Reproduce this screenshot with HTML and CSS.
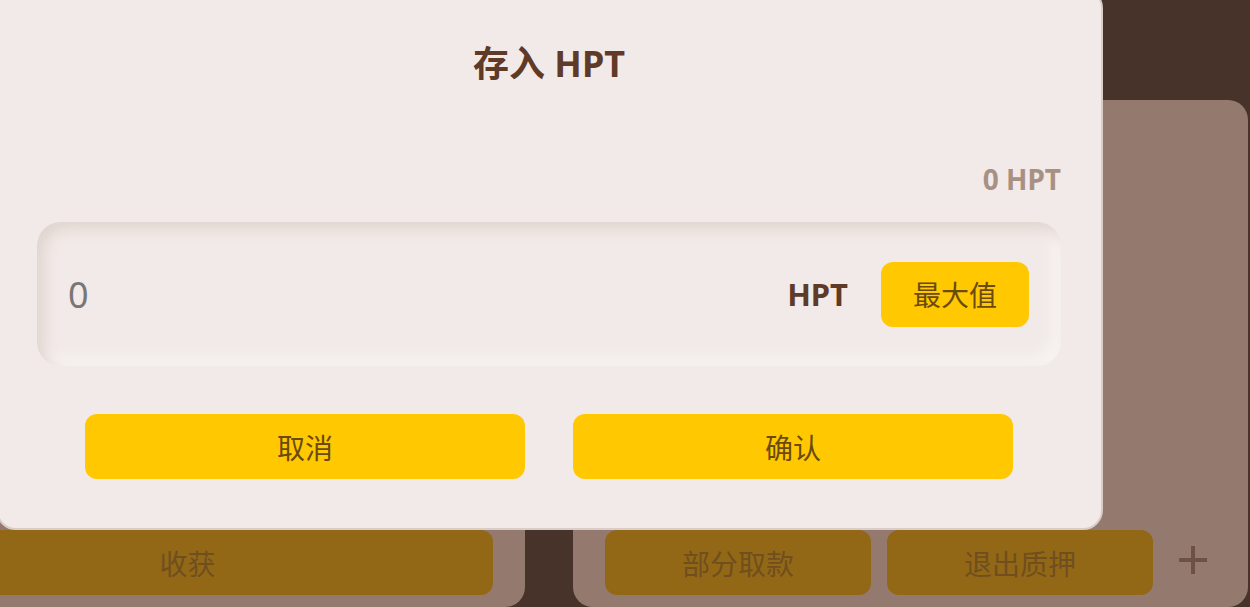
FILE: index.html
```html
<!DOCTYPE html>
<html lang="zh-CN">
<head>
  <meta charset="UTF-8">
  <meta name="viewport" content="width=device-width, initial-scale=1.0">
  <title>存入 HPT</title>
  <link rel="stylesheet" href="styles.css">
</head>
<body>

  <div class="page">
    <div class="card">
      <div class="actions">
        <button class="act wide">收获</button>
      </div>
    </div>
    <div class="card">
      <div class="actions">
        <button class="act">部分取款</button>
        <button class="act">退出质押</button>
        <div class="plus">
          <svg width="28" height="28" viewBox="0 0 28 28">
            <path d="M14 0V28M0 14H28" stroke="#6e5142" stroke-width="4"/>
          </svg>
        </div>
      </div>
    </div>
  </div>

  <div class="modal">
    <div class="modal-title">存入 HPT</div>
    <div class="balance">0 HPT</div>
    <div class="amount">
      <input class="amount-input" type="text" placeholder="0">
      <span class="unit">HPT</span>
      <button class="max">最大值</button>
    </div>
    <div class="modal-buttons">
      <button class="yellow">取消</button>
      <button class="yellow">确认</button>
    </div>
  </div>

</body>
</html>
```

FILE: styles.css
```css
body {
  margin: 0;
  background-color: #48332a;
  font-family: "Noto Sans", "Noto Sans CJK SC", sans-serif;
  overflow: hidden;
}

button {
  font-family: inherit;
  border: none;
  cursor: pointer;
}

.page {
  display: flex;
  gap: 48px;
  height: 607px;
  margin-left: -150px;
  padding-top: 100px;
  box-sizing: border-box;
}

.card {
  width: 675px;
  flex-shrink: 0;
  background-color: #947a6e;
  border-radius: 20px;
  padding: 0 32px 12px;
  box-sizing: border-box;
  display: flex;
  flex-direction: column;
  justify-content: flex-end;
}

.actions {
  display: flex;
  gap: 16px;
  align-items: center;
}

.act {
  width: 266px;
  height: 65px;
  border-radius: 12px;
  background-color: #926817;
  color: #704e1e;
  font-size: 28px;
}

.act.wide {
  width: 100%;
}

.plus {
  width: 47px;
  display: flex;
  justify-content: center;
  margin-bottom: 5px;
}

.modal {
  position: absolute;
  left: -4px;
  top: -12px;
  width: 1107px;
  box-sizing: border-box;
  background-color: #f2eae8;
  border: 2px solid #dacdc7;
  border-radius: 20px;
  padding: 50px 40px 49px 39px;
}

.modal-title {
  text-align: center;
  font-size: 36px;
  font-weight: 700;
  line-height: 48px;
  color: #5e3a27;
}

.balance {
  margin-top: 71px;
  text-align: right;
  font-size: 28px;
  font-weight: 700;
  line-height: 40px;
  color: #a89183;
}

.amount {
  margin-top: 23px;
  height: 144px;
  box-sizing: border-box;
  border-radius: 24px;
  padding: 0 32px 0 31px;
  display: flex;
  align-items: center;
  background-color: #f2eae8;
  box-shadow: inset 7px 7px 14px #e0d5cf, inset -7px -7px 14px #f8f5f3;
}

.amount-input {
  flex: 1;
  min-width: 0;
  border: none;
  outline: none;
  background: transparent;
  font-family: inherit;
  font-size: 36px;
  color: #5e3a27;
  padding: 0;
}

.amount-input::placeholder {
  color: #777;
}

.unit {
  font-size: 31px;
  font-weight: 700;
  color: #5e3a27;
  margin-right: 33px;
}

.max {
  width: 148px;
  height: 65px;
  border-radius: 12px;
  background-color: #ffc800;
  color: #6b4a0e;
  font-size: 28px;
}

.modal-buttons {
  margin-top: 48px;
  padding: 0 48px;
  display: flex;
  gap: 48px;
}

.yellow {
  flex: 1;
  height: 65px;
  border-radius: 12px;
  background-color: #ffc800;
  color: #6b4a0e;
  font-size: 28px;
}
```
